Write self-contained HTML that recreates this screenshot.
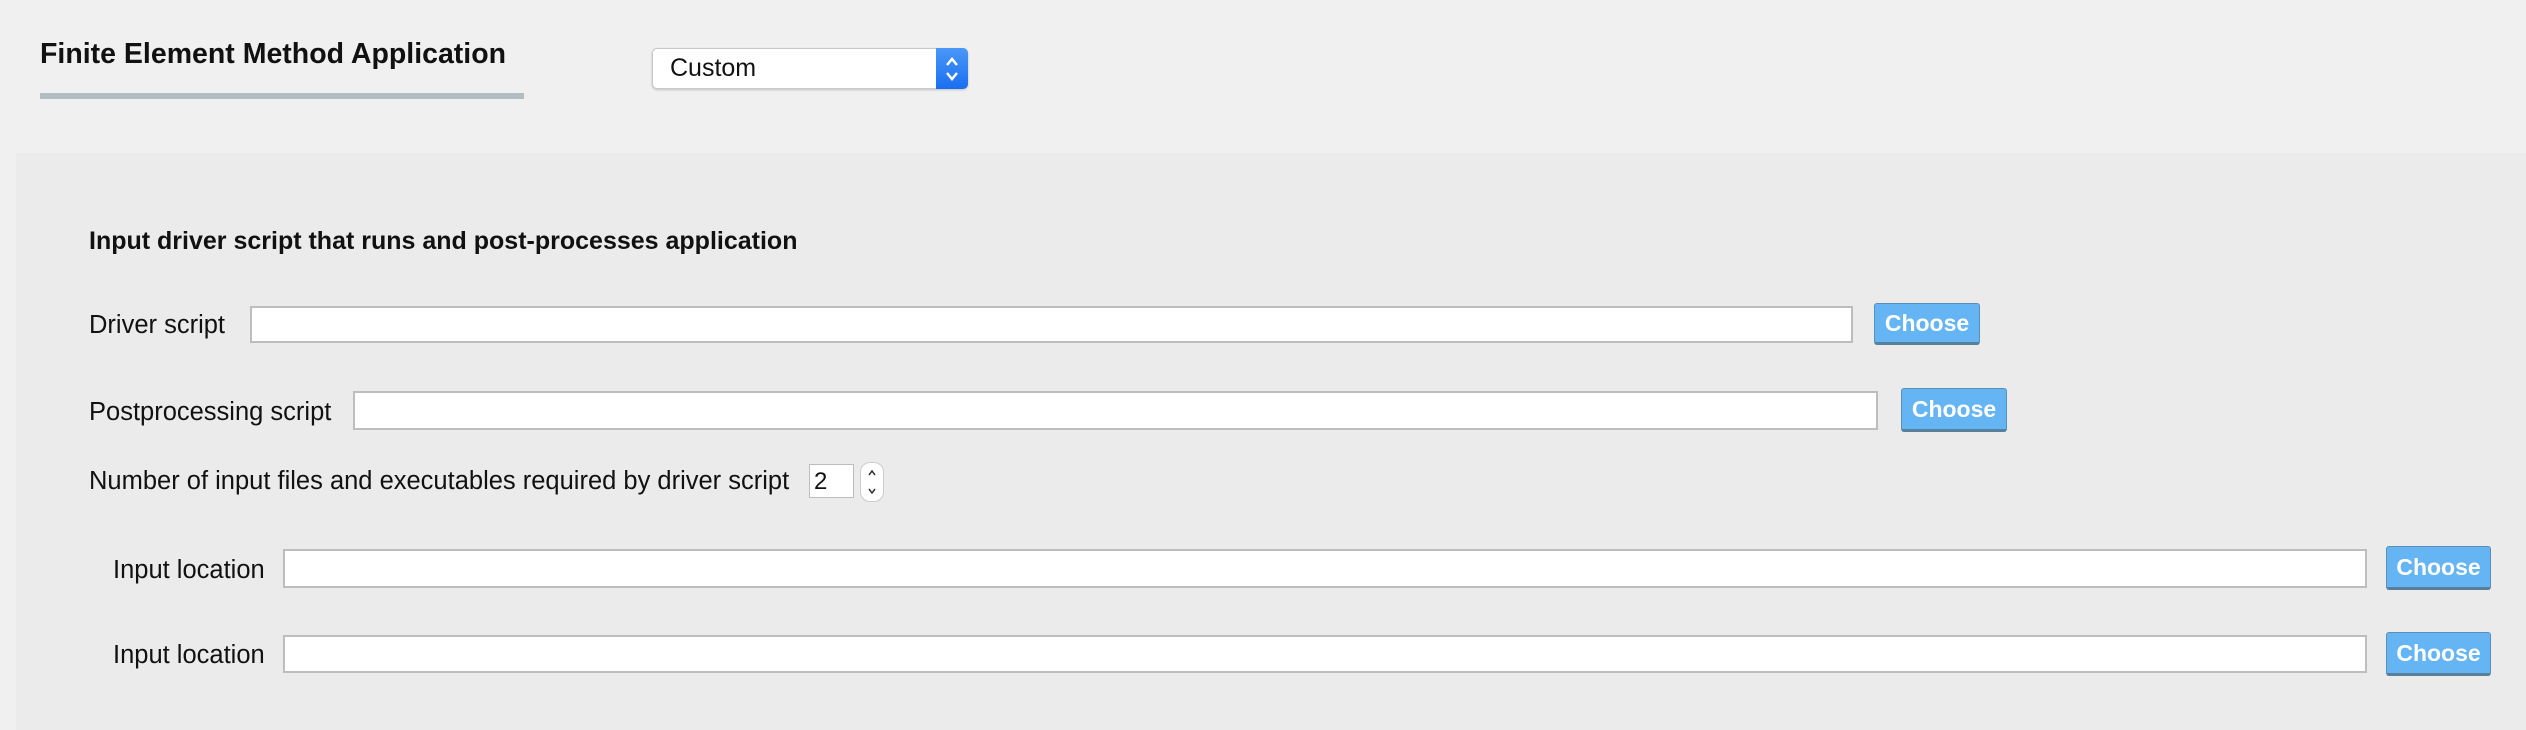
<!DOCTYPE html>
<html><head><style>
body{margin:0;width:2526px;height:730px;background:#f0f0f0;position:relative;overflow:hidden;font-family:"Liberation Sans",sans-serif;color:#111}
.a{position:absolute}
.t{font-size:25.5px;line-height:1}
.f{position:absolute;background:#fff;border:2px solid #bdbdbd;box-sizing:border-box}
.b{position:absolute;background:#65b5f5;border:1px solid #5a8fb5;border-bottom:3px solid #56809c;border-radius:3px;box-sizing:border-box;color:#fff;font-weight:bold;font-size:23px;text-align:center}
</style></head><body>
<div class="a" style="left:40px;top:40px;font-size:28.5px;font-weight:bold;line-height:1">Finite Element Method Application</div>
<div class="a" style="left:40px;top:93px;width:484px;height:6px;background:#b0bec3"></div>
<div class="a" style="left:652px;top:48px;width:316px;height:41px;background:#fff;border:1px solid #c8c8c8;border-radius:5px;box-sizing:border-box;box-shadow:0 1px 2px rgba(0,0,0,.2)"></div>
<div class="a" style="left:670px;top:56px;font-size:25px;line-height:1">Custom</div>
<div class="a" style="left:936px;top:48px;width:32px;height:41px;background:linear-gradient(#4a98f8,#1a6ff0);border-radius:0 5px 5px 0"></div>
<svg class="a" style="left:940px;top:52px" width="24" height="34"><path d="M7 13l5-6 5 6M7 21l5 6 5-6" stroke="#fff" stroke-width="2.5" fill="none"/></svg>
<div class="a" style="left:16px;top:153px;right:0;bottom:0;background:#ebebeb"></div>
<div class="a" style="left:89px;top:229px;font-size:25px;font-weight:bold;line-height:1">Input driver script that runs and post-processes application</div>
<div class="a t" style="left:89px;top:313px">Driver script</div>
<div class="f" style="left:250px;top:306px;width:1603px;height:37px"></div>
<div class="b" style="left:1874px;top:303px;width:106px;height:42px;line-height:38px">Choose</div>
<div class="a t" style="left:89px;top:400px">Postprocessing script</div>
<div class="f" style="left:353px;top:391px;width:1525px;height:39px"></div>
<div class="b" style="left:1901px;top:388px;width:106px;height:44px;line-height:40px">Choose</div>
<div class="a t" style="left:89px;top:469px">Number of input files and executables required by driver script</div>
<div class="f" style="left:809px;top:464px;width:45px;height:34px;border-width:1px;font-size:24px;padding:3px 0 0 4px">2</div>
<div class="a" style="left:860px;top:462px;width:24px;height:40px;background:#fff;border:1px solid #ccc;border-radius:10px;box-sizing:border-box"></div>
<svg class="a" style="left:860px;top:462px" width="24" height="40"><path d="M9 13l3-4 3 4M9 27l3 4 3-4" stroke="#333" stroke-width="1.5" fill="none"/></svg>
<div class="a t" style="left:113px;top:558px">Input location</div>
<div class="f" style="left:283px;top:549px;width:2084px;height:39px"></div>
<div class="b" style="left:2386px;top:546px;width:105px;height:44px;line-height:40px">Choose</div>
<div class="a t" style="left:113px;top:643px">Input location</div>
<div class="f" style="left:283px;top:635px;width:2084px;height:38px"></div>
<div class="b" style="left:2386px;top:632px;width:105px;height:44px;line-height:40px">Choose</div>
</body></html>
